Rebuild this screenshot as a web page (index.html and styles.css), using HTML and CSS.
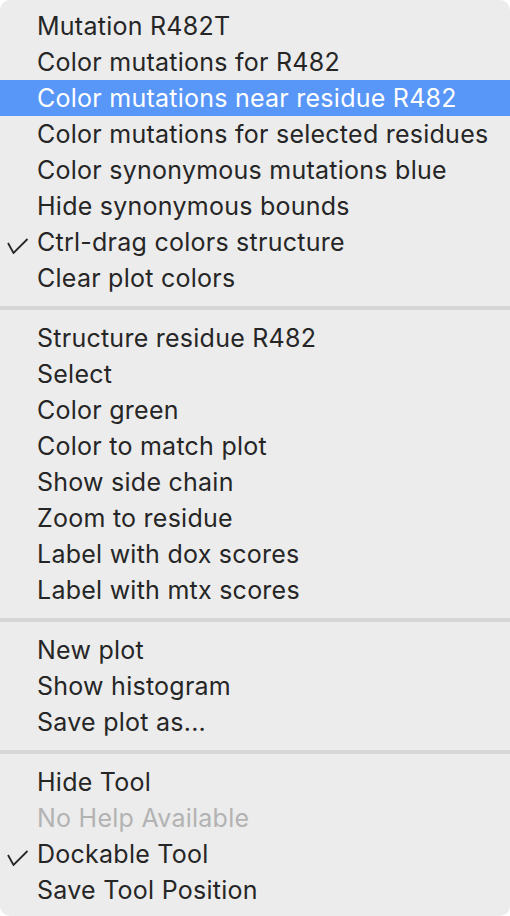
FILE: index.html
```html
<!DOCTYPE html>
<html lang="en">
<head>
    <meta charset="UTF-8">
    <meta name="viewport" content="width=device-width, initial-scale=1.0">
    <title>Context Menu</title>
    <link rel="stylesheet" href="styles.css">
</head>
<body>
    <div class="menu">
        <div class="menu-section">
            <div class="menu-item">Mutation R482T</div>
            <div class="menu-item">Color mutations for R482</div>
            <div class="menu-item active">Color mutations near residue R482</div>
            <div class="menu-item">Color mutations for selected residues</div>
            <div class="menu-item">Color synonymous mutations blue</div>
            <div class="menu-item">Hide synonymous bounds</div>
            <div class="menu-item checked">
                <svg class="check" viewBox="0 0 22 16"><path d="M1 5 L6.5 15 L20.5 1"/></svg>
                Ctrl-drag colors structure
            </div>
            <div class="menu-item">Clear plot colors</div>
        </div>
        <div class="separator"></div>
        <div class="menu-section">
            <div class="menu-item">Structure residue R482</div>
            <div class="menu-item">Select</div>
            <div class="menu-item">Color green</div>
            <div class="menu-item">Color to match plot</div>
            <div class="menu-item">Show side chain</div>
            <div class="menu-item">Zoom to residue</div>
            <div class="menu-item">Label with dox scores</div>
            <div class="menu-item">Label with mtx scores</div>
        </div>
        <div class="separator"></div>
        <div class="menu-section">
            <div class="menu-item">New plot</div>
            <div class="menu-item">Show histogram</div>
            <div class="menu-item">Save plot as...</div>
        </div>
        <div class="separator"></div>
        <div class="menu-section">
            <div class="menu-item">Hide Tool</div>
            <div class="menu-item disabled">No Help Available</div>
            <div class="menu-item checked">
                <svg class="check" viewBox="0 0 22 16"><path d="M1 5 L6.5 15 L20.5 1"/></svg>
                Dockable Tool
            </div>
            <div class="menu-item">Save Tool Position</div>
        </div>
    </div>
</body>
</html>
```

FILE: styles.css
```css
body {
    margin: 0;
    padding: 0;
    background: #ffffff;
    font-family: Inter, "Noto Sans", sans-serif;
}

.menu {
    width: 510px;
    height: 916px;
    box-sizing: border-box;
    padding: 8px 0;
    background: #ececec;
    border-radius: 10px;
    display: flex;
    flex-direction: column;
}

.menu-item {
    position: relative;
    height: 36px;
    padding-left: 37px;
    display: flex;
    align-items: center;
    font-size: 25px;
    letter-spacing: 0.25px;
    color: #262626;
    white-space: nowrap;
}

.menu-item.active {
    background: #5896f8;
    color: #ffffff;
}

.menu-item.disabled {
    color: #b3b3b3;
}

.check {
    position: absolute;
    left: 7px;
    top: 14px;
    width: 22px;
    height: 16px;
    fill: none;
    stroke: #262626;
    stroke-width: 1.8;
}

.separator {
    height: 4px;
    margin: 10px 0;
    background: #d6d6d6;
}
```
